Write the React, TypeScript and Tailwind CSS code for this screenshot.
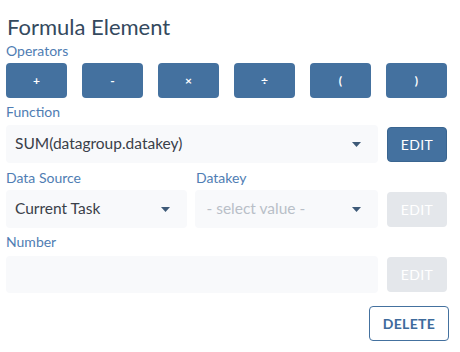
import React from 'react'

const operators = ['+', '-', '×', '÷', '(', ')']

function Caret() {
    return (
        <svg width="9" height="5" viewBox="0 0 9 5" className="shrink-0">
            <path d="M0 0 L9 0 L4.5 5 Z" fill="#3e5a78" />
        </svg>
    )
}

function Label({ children }: { children: React.ReactNode }) {
    return <div className="text-[14px] leading-[18px] text-[#4f7db3]">{children}</div>
}

function EditButton({ disabled = false }: { disabled?: boolean }) {
    return (
        <button
            className={`w-[60px] h-[35px] rounded-[4px] text-[14px] tracking-wide shrink-0 ${disabled
                    ? 'bg-[#e4e7eb] text-white'
                    : 'bg-[#44719f] text-white border border-[#3a6590]'
                }`}
        >
            EDIT
        </button>
    )
}

export default function App() {
    return (
        <div className="w-[460px] h-[352px] bg-white pl-[6px] pt-[13px] font-['Lato','Open_Sans',sans-serif] text-[#3a4049]">
            <div className="w-[441px]">
                <h1 className="text-[22px] leading-[28px] text-[#34495e] pl-[1px]">Formula Element</h1>

                <div className="mt-[1px]">
                    <Label>Operators</Label>
                </div>
                <div className="mt-[3px] flex gap-[15px]">
                    {operators.map((op) => (
                        <button
                            key={op}
                            className="w-[61px] h-[35px] rounded-[4px] bg-[#44719f] text-white text-[12px] font-bold"
                        >
                            {op}
                        </button>
                    ))}
                </div>

                <div className="mt-[5px]">
                    <Label>Function</Label>
                </div>
                <div className="mt-[4px] flex items-center gap-[9px]">
                    <div className="flex-1 h-[38px] rounded-[4px] bg-[#f8f9fb] flex items-center pl-[9px] pr-[17px]">
                        <span className="flex-1 text-[15.5px]">SUM(datagroup.datakey)</span>
                        <Caret />
                    </div>
                    <EditButton />
                </div>

                <div className="mt-[6px] flex gap-[8px] pr-[69px]">
                    <div className="flex-1">
                        <Label>Data Source</Label>
                    </div>
                    <div className="flex-1">
                        <Label>Datakey</Label>
                    </div>
                </div>
                <div className="mt-[3px] flex items-center gap-[9px]">
                    <div className="flex-1 flex gap-[8px]">
                        <div className="flex-1 h-[38px] rounded-[4px] bg-[#f8f9fb] flex items-center pl-[9px] pr-[17px]">
                            <span className="flex-1 text-[15.5px]">Current Task</span>
                            <Caret />
                        </div>
                        <div className="flex-1 h-[38px] rounded-[4px] bg-[#f8f9fb] flex items-center pl-[12px] pr-[17px]">
                            <span className="flex-1 text-[15.5px] text-[#b9bfc8]">- select value -</span>
                            <Caret />
                        </div>
                    </div>
                    <EditButton disabled />
                </div>

                <div className="mt-[5px]">
                    <Label>Number</Label>
                </div>
                <div className="mt-[5px] flex items-center gap-[9px]">
                    <div className="flex-1 h-[37px] rounded-[4px] bg-[#f8f9fb]" />
                    <EditButton disabled />
                </div>

                <div className="mt-[13px] flex justify-end -mr-[2px]">
                    <button className="w-[80px] h-[35px] rounded-[4px] border-[1.5px] border-[#44719f] bg-white text-[#3e6b9c] text-[14px] font-bold tracking-wide">
                        DELETE
                    </button>
                </div>
            </div>
        </div>
    )
}
